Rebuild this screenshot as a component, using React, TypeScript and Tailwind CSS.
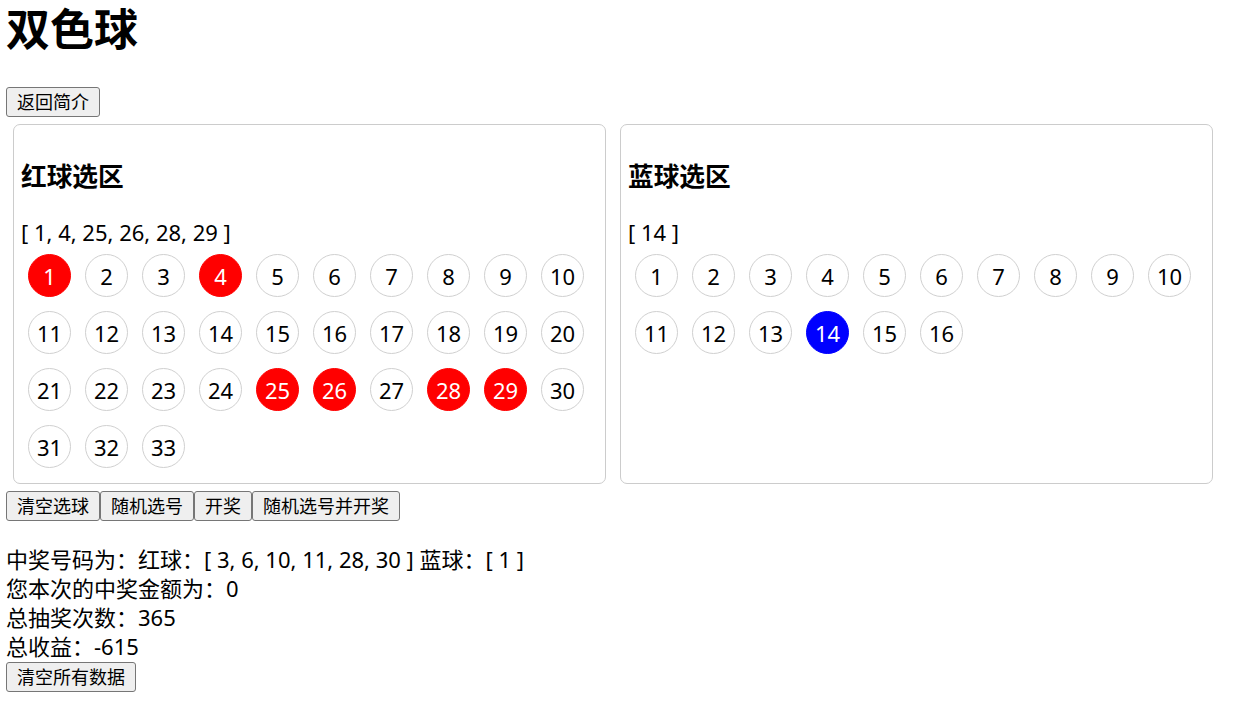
import { useState } from 'react'

const RED = Array.from({ length: 33 }, (_, i) => i + 1)
const BLUE = Array.from({ length: 16 }, (_, i) => i + 1)

const FONT = { fontFamily: '"Noto Sans", "Noto Sans CJK SC", sans-serif' }

function Ball({ n, on, color }: { n: number; on: boolean; color: 'red' | 'blue' }) {
  const active = color === 'red' ? 'bg-[#ff0000] border-[#ff0000] text-white' : 'bg-[#0000ff] border-[#0000ff] text-white'
  return (
    <div
      className={`m-[7px] flex h-[43px] w-[43px] items-center justify-center rounded-full border text-[22px] leading-none ${
        on ? active : 'border-[#d0d0d0] bg-white text-black'
      }`}
    >
      {n}
    </div>
  )
}

function Panel({
  title,
  nums,
  picked,
  color,
}: {
  title: string
  nums: number[]
  picked: number[]
  color: 'red' | 'blue'
}) {
  return (
    <div className="m-[7px] h-[360px] w-[593px] rounded-[7px] border border-[#cccccc] px-[7px] pt-[7px]">
      <h3 className="mt-[28px] mb-[24px] text-[25.7px] font-bold leading-[34px]">{title}</h3>
      <div className="text-[22px] leading-[29px]">[ {picked.join(', ')} ]</div>
      <div className="flex flex-wrap">
        {nums.map(n => (
          <Ball key={n} n={n} on={picked.includes(n)} color={color} />
        ))}
      </div>
    </div>
  )
}

const btn =
  'h-[30px] rounded-[3px] border border-[#767676] bg-[#efefef] px-[10px] text-[18px] leading-none text-black'

export default function App() {
  const [red] = useState([1, 4, 25, 26, 28, 29])
  const [blue] = useState([14])

  return (
    <div className="min-h-[702px] bg-white pl-[6px] text-black" style={FONT}>
      <h1 className="mb-[29px] text-[44px] font-bold leading-[58px]">双色球</h1>
      <button className={btn}>返回简介</button>

      <div className="flex">
        <Panel title="红球选区" nums={RED} picked={red} color="red" />
        <Panel title="蓝球选区" nums={BLUE} picked={blue} color="blue" />
      </div>

      <div className="flex">
        <button className={btn}>清空选球</button>
        <button className={btn}>随机选号</button>
        <button className={btn}>开奖</button>
        <button className={btn}>随机选号并开奖</button>
      </div>

      <div className="mt-[24px] text-[22px] leading-[29px]">
        <div>中奖号码为：红球：[ 3, 6, 10, 11, 28, 30 ] 蓝球：[ 1 ]</div>
        <div>您本次的中奖金额为：0</div>
        <div>总抽奖次数：365</div>
        <div>总收益：-615</div>
      </div>
      <button className={`${btn} mt-[1px]`}>清空所有数据</button>
    </div>
  )
}
